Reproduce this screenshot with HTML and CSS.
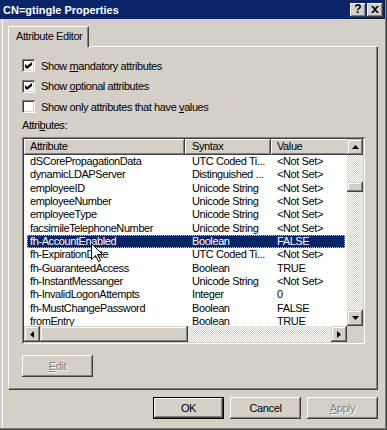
FILE: index.html
```html
<!DOCTYPE html>
<html>
<head>
    <title>CN=gtingle Properties</title>
    <link rel="stylesheet" href="styles.css">
</head>
<body>
    <div class="window">
        <div class="titlebar">
            <span class="title">CN=gtingle Properties</span>
            <div class="title-buttons">
                <span class="title-button help">?</span>
                <span class="title-button">
                    <svg width="8" height="7" viewBox="0 0 8 7"><path d="M0 0h2l2 2 2-2h2L5 3.5 8 7H6L4 5 2 7H0l3-3.5z" fill="#000"/></svg>
                </span>
            </div>
        </div>

        <div class="dialog">
            <div class="tabs">
                <div class="tab">Attribute Editor</div>
            </div>

            <div class="panel">
                <div class="check-row">
                    <span class="checkbox"><svg width="7" height="7" viewBox="0 0 7 7"><path d="M0 2l2 2 5-4v3L2 7 0 5z" fill="#000"/></svg></span>
                    <span>Show <u>m</u>andatory attributes</span>
                </div>
                <div class="check-row">
                    <span class="checkbox"><svg width="7" height="7" viewBox="0 0 7 7"><path d="M0 2l2 2 5-4v3L2 7 0 5z" fill="#000"/></svg></span>
                    <span>Show <u>o</u>ptional attributes</span>
                </div>
                <div class="check-row">
                    <span class="checkbox"></span>
                    <span>Show only attributes that have <u>v</u>alues</span>
                </div>

                <div class="field-label">Attri<u>b</u>utes:</div>

                <div class="listview">
                    <div class="list-main">
                        <div class="list-header">
                            <div class="header-cell col-attr">Attribute</div>
                            <div class="header-cell col-syntax">Syntax</div>
                            <div class="header-cell col-value">Value</div>
                        </div>
                        <div id="list-rows"></div>
                    </div>
                    <div class="vscroll">
                        <div class="scroll-btn"><svg width="7" height="4" viewBox="0 0 7 4"><path d="M0 4h7L3.5 0z" fill="#000"/></svg></div>
                        <div class="track vtrack"><div class="thumb vthumb"></div></div>
                        <div class="scroll-btn"><svg width="7" height="4" viewBox="0 0 7 4"><path d="M0 0h7L3.5 4z" fill="#000"/></svg></div>
                    </div>
                    <div class="hscroll">
                        <div class="scroll-btn"><svg width="4" height="7" viewBox="0 0 4 7"><path d="M4 0v7L0 3.5z" fill="#000"/></svg></div>
                        <div class="thumb hthumb"></div>
                        <div class="track"></div>
                        <div class="scroll-btn"><svg width="4" height="7" viewBox="0 0 4 7"><path d="M0 0v7L4 3.5z" fill="#000"/></svg></div>
                    </div>
                    <div class="corner"></div>

                    <!-- mouse pointer over the selected row -->
                    <svg class="cursor" width="13" height="20" viewBox="0 0 13 20">
                        <path d="M0.5 0.5V16.5L4.5 12.5L7.5 18.5L9.5 17.5L6.5 11.5H11.5Z" fill="#fff" stroke="#000" stroke-width="1"/>
                    </svg>
                </div>

                <button class="button disabled edit-button"><u>E</u>dit</button>
            </div>

            <div class="actions">
                <button class="button default">OK</button>
                <button class="button">Cancel</button>
                <button class="button disabled"><u>A</u>pply</button>
            </div>
        </div>
    </div>

    <script>
        // Attribute rows shown in the list
        const attributes = [
            ['dSCorePropagationData', 'UTC Coded Ti...', '<Not Set>'],
            ['dynamicLDAPServer', 'Distinguished ...', '<Not Set>'],
            ['employeeID', 'Unicode String', '<Not Set>'],
            ['employeeNumber', 'Unicode String', '<Not Set>'],
            ['employeeType', 'Unicode String', '<Not Set>'],
            ['facsimileTelephoneNumber', 'Unicode String', '<Not Set>'],
            ['fh-AccountEnabled', 'Boolean', 'FALSE'],
            ['fh-ExpirationDate', 'UTC Coded Ti...', '<Not Set>'],
            ['fh-GuaranteedAccess', 'Boolean', 'TRUE'],
            ['fh-InstantMessanger', 'Unicode String', '<Not Set>'],
            ['fh-InvalidLogonAttempts', 'Integer', '0'],
            ['fh-MustChangePassword', 'Boolean', 'FALSE'],
            ['fromEntry', 'Boolean', 'TRUE']
        ];
        const selected = 'fh-AccountEnabled';

        const rowsElement = document.getElementById('list-rows');
        attributes.forEach(attr => {
            const row = document.createElement('div');
            row.className = 'row';
            if (attr[0] === selected) {
                row.classList.add('selected');
            }
            ['cell-attr', 'cell-syntax', 'cell-value'].forEach((cls, i) => {
                const cell = document.createElement('div');
                cell.className = 'cell ' + cls;
                cell.textContent = attr[i];
                row.appendChild(cell);
            });
            rowsElement.appendChild(row);
        });
    </script>
</body>
</html>
```

FILE: styles.css
```css
body {
    margin: 0;
    background-color: #d4d0c8;
    font-family: "Liberation Sans", Arial, sans-serif;
    font-size: 11px;
    letter-spacing: -0.4px;
    color: #000;
}
.window {
    width: 386px;
    height: 429px;
    background-color: #d4d0c8;
    border-right: 1px solid #404040;
    border-bottom: 1px solid #404040;
    box-shadow: inset -1px -1px #808080, inset 2px 0 #d4d0c8, inset 3px 0 #fff;
}
.titlebar {
    height: 19px;
    margin-right: 1px;
    padding: 0 2px 0 3px;
    background-color: #0a246a;
    display: flex;
    align-items: center;
    justify-content: space-between;
}
.title {
    color: white;
    font-weight: bold;
    letter-spacing: 0;
}
.title-buttons {
    display: flex;
    gap: 1px;
}
.title-button {
    width: 16px;
    height: 14px;
    box-sizing: border-box;
    background-color: #d4d0c8;
    box-shadow: inset -1px -1px #404040, inset 1px 1px #fff, inset -2px -2px #808080;
    display: flex;
    align-items: center;
    justify-content: center;
    padding-bottom: 1px;
}
.title-button.help {
    font-weight: bold;
    font-size: 12px;
    letter-spacing: 0;
    line-height: 12px;
}
.dialog {
    padding: 7px 7px 0 8px;
}
.tabs {
    display: flex;
    position: relative;
    z-index: 1;
    margin-bottom: -1px;
}
.tab {
    width: 81px;
    height: 21px;
    box-sizing: border-box;
    padding-left: 7px;
    line-height: 19px;
    background-color: #d4d0c8;
    border-left: 1px solid #fff;
    border-top: 1px solid #fff;
    border-right: 1px solid #404040;
    border-radius: 2px 2px 0 0;
    box-shadow: inset -1px 0 #808080;
}
.panel {
    width: 370px;
    height: 344px;
    box-sizing: border-box;
    padding: 12px 0 0 13px;
    border-left: 1px solid #fff;
    border-top: 1px solid #fff;
    border-right: 1px solid #404040;
    border-bottom: 1px solid #404040;
    box-shadow: inset -1px -1px #808080;
}
.check-row {
    display: flex;
    align-items: center;
    gap: 6px;
    height: 13px;
    margin-bottom: 7.5px;
}
.checkbox {
    width: 13px;
    height: 13px;
    box-sizing: border-box;
    padding: 3px;
    background-color: white;
    box-shadow: inset 1px 1px #808080, inset -1px -1px #fff, inset 2px 2px #404040, inset -2px -2px #d4d0c8;
    display: flex;
}
.field-label {
    margin-top: -1.5px;
    line-height: 13px;
}
.listview {
    position: relative;
    margin-top: 5px;
    width: 343px;
    height: 207px;
    box-sizing: border-box;
    padding: 2px;
    box-shadow: inset 1px 1px #808080, inset -1px -1px #fff, inset 2px 2px #404040, inset -2px -2px #d4d0c8;
    display: grid;
    grid-template-columns: 323px 16px;
    grid-template-rows: 187px 16px;
}
.list-main {
    background-color: white;
    overflow: hidden;
}
.list-header {
    display: flex;
    height: 16px;
    background-color: #d4d0c8;
}
.header-cell {
    flex-shrink: 0;
    box-sizing: border-box;
    padding-left: 6px;
    line-height: 15px;
    box-shadow: inset -1px -1px #404040, inset 1px 1px #fff, inset -2px -2px #808080;
}
.col-attr {
    width: 161px;
}
.col-syntax {
    width: 86px;
    padding-left: 7px;
}
.col-value {
    width: 140px;
}
.row {
    display: flex;
    width: 318px;
    margin-left: 3px;
    height: 13.34px;
    line-height: 13.34px;
    white-space: nowrap;
}
.row.selected {
    background-color: #0a246a;
    color: white;
    outline: 1px dotted #e6c25a;
    outline-offset: -1px;
}
.cell {
    flex-shrink: 0;
    box-sizing: border-box;
    overflow: hidden;
}
.cell-attr {
    width: 158px;
    padding-left: 3px;
}
.cell-syntax {
    width: 86px;
    padding-left: 7px;
}
.cell-value {
    width: 74px;
    padding-left: 6px;
}
.vscroll {
    display: flex;
    flex-direction: column;
}
.hscroll {
    display: flex;
}
.scroll-btn {
    width: 16px;
    height: 16px;
    flex-shrink: 0;
    box-sizing: border-box;
    background-color: #d4d0c8;
    box-shadow: inset -1px -1px #404040, inset 1px 1px #d4d0c8, inset -2px -2px #808080, inset 2px 2px #fff;
    display: flex;
    align-items: center;
    justify-content: center;
}
.track {
    flex: 1;
    background-color: #fff;
    background-image: conic-gradient(#d4d0c8 25%, #fff 0 50%, #d4d0c8 0 75%, #fff 0);
    background-size: 2px 2px;
}
.thumb {
    box-sizing: border-box;
    background-color: #d4d0c8;
    box-shadow: inset -1px -1px #404040, inset 1px 1px #d4d0c8, inset -2px -2px #808080, inset 2px 2px #fff;
}
.vthumb {
    height: 10px;
    margin-top: 27px;
}
.hthumb {
    width: 148px;
    flex-shrink: 0;
}
.corner {
    background-color: #d4d0c8;
}
.cursor {
    position: absolute;
    left: 69px;
    top: 106px;
}
.button {
    width: 71px;
    height: 22px;
    box-sizing: border-box;
    padding: 0;
    border: none;
    background-color: #d4d0c8;
    font: inherit;
    letter-spacing: inherit;
    color: #000;
    box-shadow: inset -1px -1px #404040, inset 1px 1px #fff, inset -2px -2px #808080, inset 2px 2px #d4d0c8;
}
.button.default {
    border: 1px solid #000;
    box-shadow: inset -1px -1px #404040, inset 1px 1px #fff, inset -2px -2px #808080;
}
.button.disabled {
    color: #808080;
    text-shadow: 1px 1px #fff;
}
.edit-button {
    margin-top: 11px;
}
.actions {
    display: flex;
    justify-content: flex-end;
    gap: 6px;
    margin-top: 7px;
    padding-right: 1px;
}
```
